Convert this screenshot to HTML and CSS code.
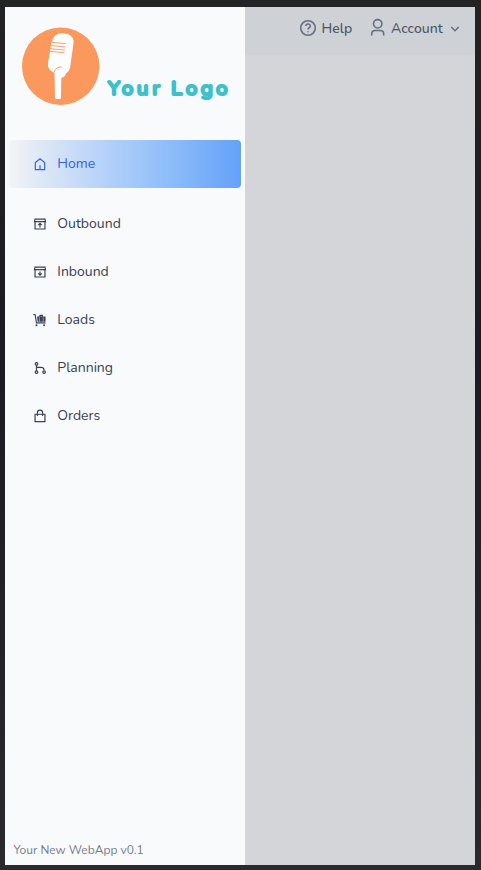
FILE: index.html
```html
<!DOCTYPE html>
<html lang="en">
<head>
<meta charset="utf-8">
<title>Your New WebApp</title>
<link rel="stylesheet" href="styles.css">
</head>
<body>
<div class="app">
  <aside class="sidebar">
    <svg class="logo" viewBox="0 0 240 112" role="img" aria-label="Your Logo">
      <circle cx="55.7" cy="59.2" r="38.7" fill="#fa985e"/>
      <path d="M46.500 35.500Q49 25.500 58.500 26.300Q69.500 27.500 68.500 36.500L65 61Q64 65 61 66.500Q60 70 56.300 71L56 90.500Q56 92 54.500 92H51.500Q50 92 50 90.500L49.500 66Q42 63 43 56Z" fill="#fff"/>
      <path d="M46 35.300L61 36.700M45.500 38.500L60.500 39.900M45 41.700L60 43.100M44.500 44.400L59.500 45.600M49 65.500Q50.500 59.500 57 60" fill="none" stroke="#fa985e" stroke-width=".9"/>
      <text class="logo-text" x="102.800 116.700 131.700 147.200 166 180.800 195.800 211" y="87.500">YourLogo</text>
    </svg>
    <nav class="menu">
      <a class="item active"><svg viewBox="0 0 24 24"><path d="M4 21.500V9.500L12 3L20 9.500V21.500ZM12 21V14"/></svg><span>Home</span></a>
      <a class="item"><svg viewBox="0 0 24 24"><path d="M3.500 8V20.500H20.500V8M2.500 8H21.500L20.500 3.500H3.500ZM12 18V11.500M9 14L12 11L15 14"/></svg><span>Outbound</span></a>
      <a class="item"><svg viewBox="0 0 24 24"><path d="M3.500 8V20.500H20.500V8M2.500 8H21.500L20.500 3.500H3.500ZM12 11V17.500M9 14.500L12 17.500L15 14.500"/></svg><span>Inbound</span></a>
      <a class="item"><svg viewBox="0 0 24 24"><path d="M.5 2.500H3.500L6 17H21.500"/><path class="solid" d="M7 6H11V3H17V6H21.500V15H8ZM13 5V6H15V5Z"/><path class="gap" d="M11 7V15M17.500 7V15"/><circle class="solid" cx="6" cy="21" r="1.700"/><circle class="solid" cx="19" cy="21" r="1.700"/></svg><span>Loads</span></a>
      <a class="item"><svg viewBox="0 0 24 24"><circle cx="6" cy="5" r="2.200"/><circle cx="6" cy="19" r="2.200"/><circle cx="19" cy="19" r="2.200"/><path d="M6 7.500V16.500M6 11H14Q19 11 19 16"/></svg><span>Planning</span></a>
      <a class="item"><svg viewBox="0 0 24 24"><path d="M3.500 9H20.500V21.500H3.500ZM7.500 12V6.500Q7.500 2 12 2T16.500 6.500V12"/></svg><span>Orders</span></a>
    </nav>
    <footer class="version">Your New WebApp v0.1</footer>
  </aside>
  <main class="content">
    <header class="topbar">
      <svg class="help-icon" viewBox="0 0 18 18"><circle cx="9" cy="9" r="7.300"/><path d="M6.800 7Q7 5 9 5T11.300 7Q11.300 8.300 10 8.900Q9 9.400 9 10.500M9 12.200V13.300"/></svg>
      <span class="help">Help</span>
      <svg class="user-icon" viewBox="0 0 16 20"><circle cx="7.700" cy="5.800" r="4.200"/><path d="M1.700 17.500V16Q1.700 12.500 5.200 12.500H10.200Q13.700 12.500 13.700 16V17.500"/></svg>
      <span class="account">Account</span>
      <svg class="chevron" viewBox="0 0 10 10"><path d="M1.300 3L5 6.700L8.700 3"/></svg>
    </header>
  </main>
</div>
</body>
</html>
```
FILE: styles.css
```css
* { box-sizing: border-box; }
body {
  margin: 0;
  height: 870px;
  padding: 7px 6px 5px 5px;
  overflow: hidden;
  background: linear-gradient(#232324, #1c1b23 40%, #2a292e);
  font-family: Nunito, "Open Sans", sans-serif;
  font-size: 14px;
}
.app { display: flex; height: 858px; }
.sidebar {
  display: flex;
  flex-direction: column;
  width: 240px;
  background: #f9fafc;
}
.logo { display: block; width: 240px; height: 112px; }
.logo-text {
  font: 600 20.5px Nunito, sans-serif;
  fill: #3bc1ca;
  stroke: #3bc1ca;
  stroke-width: 2.2px;
  stroke-linejoin: round;
}
.menu { display: flex; flex-direction: column; padding: 21px 4px 0; }
.item {
  display: flex;
  align-items: center;
  height: 48px;
  padding-left: 24px;
  color: #374151;
}
.item svg {
  width: 14px;
  height: 14px;
  margin-right: 10.3px;
  fill: none;
  stroke: currentColor;
  stroke-width: 2;
}
.item .solid { fill: currentColor; stroke: none; }
.item .gap { stroke: #f9fafc; stroke-width: .8; }
.item span { position: relative; top: -1px; }
.active {
  margin-bottom: 12px;
  border-radius: 4px;
  color: #365fe5;
  background: linear-gradient(90deg, #f3f4f6, #dce7f5 15%, #bfd7f8 34%, #93c0f8 65%, #64a1fa);
}
.version {
  margin-top: auto;
  padding: 0 8px 6px 8.4px;
  color: #747b89;
  font-size: 12px;
  line-height: 18px;
}
.content { flex: 1; background: #d4d5d9; }
.topbar {
  display: flex;
  align-items: center;
  justify-content: flex-end;
  height: 48px;
  padding: 0 15px 6px 0;
  color: #4b5563;
  background: #ced1d6;
  font-weight: 500;
}
.topbar svg { fill: none; stroke: #667080; stroke-width: 1.6; }
.help-icon { width: 18px; height: 18px; margin-right: 4.5px; }
.help { width: 32.5px; }
.user-icon { width: 16px; height: 20px; margin: 0 5px 0 16px; }
.account { width: 53px; }
.chevron { width: 10px; height: 10px; margin-left: 6px; position: relative; top: 1px; }
```
